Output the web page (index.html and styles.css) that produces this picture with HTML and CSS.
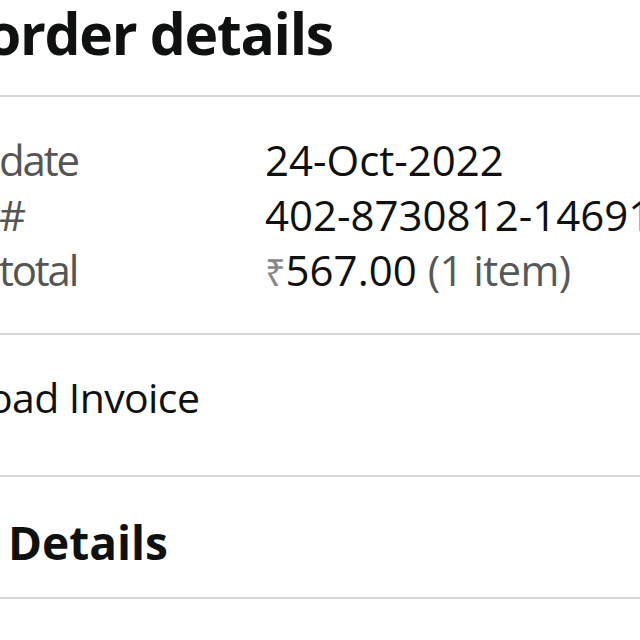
FILE: index.html
```html
<!DOCTYPE html>
<html>
<head>
<meta charset="utf-8">
<link rel="stylesheet" href="styles.css">
</head>
<body>
<main class="page">
  <section class="head">
    <h1 class="title"><span class="pre">View </span>order details</h1>
  </section>
  <section class="summary">
    <div class="row"><span class="label"><span class="pre">Order </span>date</span><span class="value">24-Oct-2022</span></div>
    <div class="row"><span class="label"><span class="pre">Order </span>#</span><span class="value">402-8730812-1469135</span></div>
    <div class="row"><span class="label"><span class="pre">Order </span>total</span><span class="value"><span class="rupee">₹</span>567.00 <span class="muted">(1 item)</span></span></div>
  </section>
  <section class="invoice">
    <span class="link"><span class="pre">Downl</span>oad Invoice</span>
  </section>
  <section class="details">
    <h2 class="subtitle"><span class="pre">Payment </span>Details</h2>
  </section>
</main>
</body>
</html>
```
FILE: styles.css
```css
html, body {
  margin: 0;
  padding: 0;
  background: #ffffff;
  overflow: hidden;
}
body {
  width: 640px;
  height: 640px;
  font-family: "Open Sans", "Noto Sans", sans-serif;
  color: #0f1111;
}
.page {
  display: flex;
  flex-direction: column;
}
.pre {
  display: inline-flex;
  justify-content: flex-end;
  width: 0;
  white-space: pre;
  overflow: visible;
}
.head {
  height: 95px;
  border-bottom: 2px solid #d5d5d5;
  display: flex;
  align-items: flex-end;
}
.title {
  margin: 0 0 32px -14px;
  font-size: 57px;
  font-weight: 700;
  line-height: 60px;
  letter-spacing: -1.3px;
  white-space: nowrap;
}
.summary {
  height: 238px;
  border-bottom: 2px solid #d5d5d5;
  display: flex;
  flex-direction: column;
  padding-top: 35px;
  box-sizing: border-box;
}
.row {
  display: flex;
  height: 55px;
  align-items: center;
  font-size: 42px;
  white-space: nowrap;
}
.label {
  width: 266px;
  flex: none;
  color: #555555;
  margin-left: -1px;
  letter-spacing: -2.2px;
}
.value {
  color: #0f1111;
}
.rupee {
  color: #888;
  font-size: 36px;
}
.muted {
  color: #565959;
  letter-spacing: -0.6px;
}
.invoice {
  height: 124px;
  padding-bottom: 16px;
  border-bottom: 2px solid #d5d5d5;
  display: flex;
  align-items: center;
  font-size: 41px;
  white-space: nowrap;
}
.link {
  margin-left: -12px;
  letter-spacing: -0.6px;
}
.details {
  height: 110px;
  padding-top: 10px;
  border-bottom: 2px solid #d5d5d5;
  display: flex;
  align-items: center;
}
.subtitle {
  margin: 0 0 0 8px;
  font-size: 46px;
  font-weight: 700;
  white-space: nowrap;
}
```
